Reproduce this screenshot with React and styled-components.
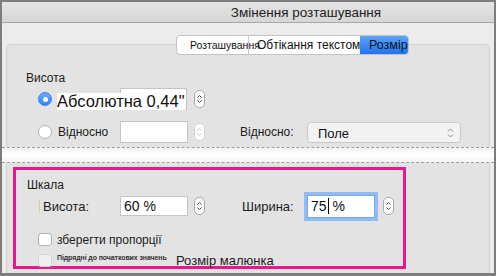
import React from "react";
import styled, { createGlobalStyle } from "styled-components";

const GlobalStyle = createGlobalStyle`
  html, body {
    margin: 0;
    padding: 0;
    background: #ececec;
  }
  body {
    font-family: "Liberation Sans", Arial, sans-serif;
    color: #1b1b1b;
  }
`;

const Window = styled.div`
  width: 496px;
  height: 276px;
  box-sizing: border-box;
  border: 2px solid #7d7d7d;
  border-bottom-width: 3px;
  background: #ececec;
  display: flex;
  flex-direction: column;
  overflow: hidden;
`;

const TitleBar = styled.div`
  height: 20px;
  flex-shrink: 0;
  background: linear-gradient(#e4e4e4, #d6d6d6);
  border-bottom: 1px solid #a8a8a8;
  padding-left: 116px;
  display: flex;
  align-items: center;
  justify-content: center;
  font-size: 13.5px;
  color: #222;
`;

const TopArea = styled.div`
  padding: 12px 4px 0 4px;
  display: flex;
  flex-direction: column;
`;

const Tabs = styled.div`
  margin-left: 170px;
  width: 233px;
  height: 20px;
  box-sizing: border-box;
  display: flex;
  background: #fff;
  border: 1px solid #c3c3c3;
  border-radius: 4px;
  overflow: hidden;
  position: relative;
  z-index: 1;
`;

const Tab = styled.div`
  width: ${(p) => p.$w}px;
  padding-left: ${(p) => p.$pad}px;
  box-sizing: border-box;
  display: flex;
  align-items: center;
  white-space: nowrap;
  font-size: ${(p) => p.$size}px;
  color: #111;
  border-right: ${(p) => (p.$divider ? "1px solid #cfcfcf" : "none")};
  background: ${(p) =>
    p.$active ? "linear-gradient(#5ba4ff, #1f74f2)" : "transparent"};
`;

const PanelTop = styled.div`
  margin-top: -11px;
  background: #e3e3e3;
  border: 1px solid #d0d0d0;
  border-bottom: none;
  border-radius: 5px 5px 0 0;
  padding: 26px 0 4px 19px;
`;

const SectionLabel = styled.div`
  font-size: 12px;
  line-height: 14px;
  color: #1b1b1b;
`;

const OptionRow = styled.div`
  height: 22px;
  margin-top: ${(p) => p.$gap}px;
  padding-left: 12px;
  display: flex;
  align-items: center;
`;

const Radio = styled.span`
  width: 14px;
  height: 14px;
  box-sizing: border-box;
  border-radius: 50%;
  flex-shrink: 0;
  display: flex;
  align-items: center;
  justify-content: center;
  background: ${(p) => (p.$on ? "linear-gradient(#68adff, #2f82f5)" : "#fff")};
  border: 1px solid ${(p) => (p.$on ? "#3a83e8" : "#b3b3b3")};
  &::after {
    content: "";
    display: ${(p) => (p.$on ? "block" : "none")};
    width: 5px;
    height: 5px;
    border-radius: 50%;
    background: #fff;
  }
`;

const OverlayField = styled.div`
  position: relative;
  width: 130px;
  height: 22px;
  margin-left: 5px;
  display: flex;
  justify-content: flex-end;
`;

const BigCaption = styled.span`
  position: absolute;
  left: 0;
  top: 5px;
  height: 17px;
  line-height: 17px;
  font-size: 16.5px;
  background: #fff;
  color: #111;
  white-space: nowrap;
  z-index: 2;
`;

const Input = styled.div`
  width: ${(p) => p.$w || 68}px;
  height: ${(p) => p.$h || 22}px;
  box-sizing: border-box;
  background: #fff;
  border: 1px solid ${(p) => (p.$focus ? "#7aa9e6" : "#c4c4c4")};
  box-shadow: ${(p) => (p.$focus ? "0 0 0 3px #8fbcf2" : "none")};
  display: flex;
  align-items: center;
  padding-left: 3px;
  font-size: 14px;
  color: #111;
  flex-shrink: 0;
`;

const Caret = styled.span`
  display: inline-block;
  width: 1px;
  height: 16px;
  background: #000;
  margin: 0 4px 0 1px;
`;

const Label = styled.span`
  font-size: ${(p) => p.$size || 12}px;
  width: ${(p) => (p.$w ? `${p.$w}px` : "auto")};
  margin-left: ${(p) => p.$ml || 0}px;
  white-space: nowrap;
  flex-shrink: 0;
  color: #1b1b1b;
`;

const StepperBox = styled.div`
  width: 11px;
  height: 18px;
  box-sizing: border-box;
  margin-left: ${(p) => p.$ml}px;
  border: 1px solid ${(p) => (p.$disabled ? "#d2d2d2" : "#a9a9a9")};
  border-radius: 5px;
  background: #fff;
  display: flex;
  align-items: center;
  justify-content: center;
  flex-shrink: 0;
`;

const Stepper = ({ ml, disabled }) => (
  <StepperBox $ml={ml} $disabled={disabled}>
    <svg width="7" height="12" viewBox="0 0 7 12">
      <path
        d="M1.5 4.5 L3.5 2.5 L5.5 4.5 M1.5 7.5 L3.5 9.5 L5.5 7.5"
        fill="none"
        stroke={disabled ? "#c4c4c4" : "#444"}
        strokeWidth="1"
      />
    </svg>
  </StepperBox>
);

const Select = styled.div`
  width: 154px;
  height: 21px;
  box-sizing: border-box;
  border: 1px solid #c9c9c9;
  border-radius: 4px;
  background: #f3f3f3;
  display: flex;
  align-items: center;
  justify-content: space-between;
  padding: 2px 6px 0 10px;
  font-size: 13px;
  color: #111;
`;

const CutBand = styled.div`
  height: 14px;
  flex-shrink: 0;
  border-top: 1px dashed #9c9c9c;
  border-bottom: 1px dashed #9c9c9c;
  background: linear-gradient(#f1f1f1, #ffffff 45%, #f6f6f6);
`;

const BottomArea = styled.div`
  flex: 1;
  padding: 0 4px;
  display: flex;
`;

const PanelRest = styled.div`
  flex: 1;
  background: #e3e3e3;
  border-left: 1px solid #d0d0d0;
  border-right: 1px solid #d0d0d0;
  padding: 4px 0 0 6px;
`;

const Highlight = styled.div`
  width: 393px;
  height: 102px;
  box-sizing: border-box;
  border: 3px solid #e8178a;
  padding: 8px 0 0 11px;
`;

const ScaleRow = styled.div`
  height: 20px;
  margin-top: 4px;
  padding-left: 12px;
  display: flex;
  align-items: center;
`;

const Tick = styled.span`
  width: 1px;
  height: 13px;
  background: #dccf9f;
  margin-right: 3px;
  flex-shrink: 0;
`;

const CheckRow = styled.div`
  height: 13px;
  margin-top: ${(p) => p.$gap}px;
  padding-left: 11px;
  display: flex;
  align-items: center;
`;

const Checkbox = styled.span`
  width: 14px;
  height: 13px;
  box-sizing: border-box;
  border-radius: 3px;
  flex-shrink: 0;
  margin-right: 5px;
  background: ${(p) => (p.$disabled ? "#efefef" : "#fff")};
  border: 1px solid ${(p) => (p.$disabled ? "#d3d3d3" : "#b0b0b0")};
`;

const TinyText = styled.span`
  font-size: 7px;
  font-weight: bold;
  color: #333;
  width: 110px;
  white-space: nowrap;
  flex-shrink: 0;
  letter-spacing: -0.1px;
  margin-top: -6px;
`;

export default function App() {
  return (
    <>
      <GlobalStyle />
      <Window>
        <TitleBar>Змінення розташування</TitleBar>
        <TopArea>
          <Tabs>
            <Tab $w={72} $pad={13} $size={10.5} $divider>
              Розташування
            </Tab>
            <Tab $w={111} $pad={8} $size={12}>
              Обтікання текстом
            </Tab>
            <Tab $w={50} $pad={9} $size={12.5} $active>
              Розмір
            </Tab>
          </Tabs>
          <PanelTop>
            <SectionLabel>Висота</SectionLabel>
            <OptionRow $gap={3}>
              <Radio $on />
              <OverlayField>
                <BigCaption>Абсолютна 0,44"</BigCaption>
                <Input $w={67} />
              </OverlayField>
              <Stepper ml={7} />
            </OptionRow>
            <OptionRow $gap={11}>
              <Radio />
              <Label $ml={6} $w={62}>
                Відносно
              </Label>
              <Input $w={68} />
              <Stepper ml={6} disabled />
              <Label $ml={35} $w={67}>
                Відносно:
              </Label>
              <Select>
                <span>Поле</span>
                <svg width="7" height="12" viewBox="0 0 7 12">
                  <path
                    d="M1 4.5 L3.5 2 L6 4.5 M1 7.5 L3.5 10 L6 7.5"
                    fill="none"
                    stroke="#8a8a8a"
                    strokeWidth="1"
                  />
                </svg>
              </Select>
            </OptionRow>
          </PanelTop>
        </TopArea>
        <CutBand />
        <BottomArea>
          <PanelRest>
            <Highlight>
              <SectionLabel>Шкала</SectionLabel>
              <ScaleRow>
                <Tick />
                <Label $size={13} $w={77}>
                  Висота:
                </Label>
                <Input $w={68} $h={20}>
                  60 %
                </Input>
                <Stepper ml={6} />
                <Label $size={13} $ml={37} $w={65}>
                  Ширина:
                </Label>
                <Input $w={68} $h={23} $focus>
                  75
                  <Caret />%
                </Input>
                <Stepper ml={8} />
              </ScaleRow>
              <CheckRow $gap={17}>
                <Checkbox />
                <Label $size={12}>зберегти пропорції</Label>
              </CheckRow>
              <CheckRow $gap={8}>
                <Checkbox $disabled />
                <TinyText>Підрядні до початкових значень</TinyText>
                <Label $size={13} $ml={9}>
                  Розмір малюнка
                </Label>
              </CheckRow>
            </Highlight>
          </PanelRest>
        </BottomArea>
      </Window>
    </>
  );
}
